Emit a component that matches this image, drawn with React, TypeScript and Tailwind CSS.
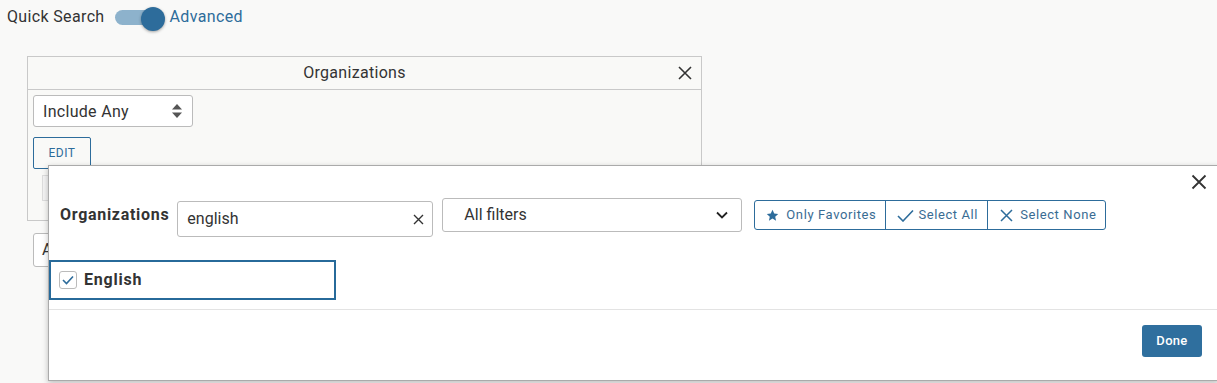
import React from "react";

const font = { fontFamily: "Roboto, 'Liberation Sans', sans-serif" };

export default function App() {
  return (
    <div className="relative w-[1217px] h-[383px] overflow-hidden bg-[#f9f9f8] text-[#333]" style={font}>
      {/* Top toggle row */}
      <div className="flex items-center h-[34px] pl-[7px] tracking-[0.35px]">
        <span className="text-[16px] text-[#333]">Quick Search</span>
        <div className="relative ml-[10px] w-[52px] h-[24px] flex items-center">
          <div className="w-[46px] h-[15px] rounded-full bg-[#8db2cc]" />
          <div className="absolute left-[26px] top-[2px] w-[24px] h-[24px] rounded-full bg-[#2d6c9b] shadow-[0_1px_3px_rgba(0,0,0,0.35)]" />
        </div>
        <span className="ml-[3px] text-[16px] text-[#2d6c9b]">Advanced</span>
      </div>

      {/* Background panel */}
      <div className="ml-[27px] mt-[22px] w-[675px] h-[165px] border border-[#c9c9c9] bg-[#f9f9f7]">
        <div className="relative h-[33px] border-b border-[#c9c9c9] flex items-center justify-center pr-[20px]">
          <span className="text-[16px] tracking-[0.3px] text-[#333]">Organizations</span>
          <svg className="absolute right-[9px] top-[9px]" width="14" height="14" viewBox="0 0 14 14">
            <path d="M1 1L13 13M13 1L1 13" stroke="#333" strokeWidth="1.6" />
          </svg>
        </div>
        <div className="pl-[5px] pt-[5px]">
          <div className="w-[160px] h-[32px] border border-[#bbb] rounded-[3px] bg-white flex items-center justify-between px-[9px]">
            <span className="text-[16px] tracking-[0.3px] text-[#333] mt-[1px]">Include Any</span>
            <svg width="12" height="18" viewBox="0 0 12 18">
              <path d="M6 2L11 7.5H1Z" fill="#555" />
              <path d="M6 16L11 10.5H1Z" fill="#555" />
            </svg>
          </div>
          <div className="mt-[10px] w-[58px] h-[32px] border border-[#2d6c9b] rounded-[2px] flex items-center justify-center">
            <span className="text-[12px] text-[#2d6c9b] tracking-[0.5px]">EDIT</span>
          </div>
          <div className="mt-[6px] ml-[9px] w-[20px] h-[26px] border border-[#ddd] bg-[#f4f4f4]" />
        </div>
      </div>
      <div className="ml-[33px] mt-[12px] w-[60px] h-[34px] border border-[#bbb] rounded-[3px] bg-white flex items-center pl-[8px]">
        <span className="text-[16px] text-[#333]">A</span>
      </div>

      {/* Modal */}
      <div className="absolute left-[48px] top-[165px] right-[-2px] h-[216px] bg-white border border-[#aaa] shadow-[0_2px_6px_rgba(0,0,0,0.25)] flex flex-col">
        <svg className="absolute right-[11px] top-[8px]" width="16" height="16" viewBox="0 0 16 16">
          <path d="M1.5 1.5L14.5 14.5M14.5 1.5L1.5 14.5" stroke="#333" strokeWidth="1.8" />
        </svg>
        <div className="flex items-start mt-[32px] pl-[11px] h-[38px]">
          <span className="mt-[7px] text-[16px] leading-[20px] font-bold tracking-[0.7px] text-[#333]">Organizations</span>
          <div className="ml-[8px] w-[256px] h-[36px] mt-[3px] border border-[#bbb] rounded-[3px] flex items-center justify-between pl-[9px] pr-[8px]">
            <span className="text-[16px] text-[#333]">english</span>
            <svg width="11" height="11" viewBox="0 0 11 11">
              <path d="M1 1L10 10M10 1L1 10" stroke="#333" strokeWidth="1.4" />
            </svg>
          </div>
          <div className="ml-[9px] w-[300px] h-[34px] border border-[#bbb] rounded-[3px] flex items-center justify-between pl-[21px] pr-[13px]">
            <span className="text-[16px] text-[#333]">All filters</span>
            <svg width="12" height="8" viewBox="0 0 12 8">
              <path d="M1 1.5L6 6.5L11 1.5" stroke="#222" strokeWidth="1.8" fill="none" />
            </svg>
          </div>
          <div className="ml-[12px] mt-[2px] h-[30px] flex border border-[#2d6c9b] rounded-[3px] text-[13px] text-[#3a6c93] tracking-[0.6px]">
            <div className="flex items-center pl-[11px] pr-[9px] border-r border-[#2d6c9b]">
              <svg width="13" height="13" viewBox="0 0 24 24" className="mr-[7px]">
                <path d="M12 1.5l3.2 6.9 7.3.8-5.5 5 1.6 7.3L12 17.7 5.4 21.5 7 14.2 1.5 9.2l7.3-.8z" fill="#2d6c9b" />
              </svg>
              <span>Only Favorites</span>
            </div>
            <div className="flex items-center pl-[11px] pr-[9px] border-r border-[#2d6c9b]">
              <svg width="17" height="13" viewBox="0 0 17 13" className="mr-[4px]">
                <path d="M1 7L6 12L16 1.5" stroke="#2d6c9b" strokeWidth="1.6" fill="none" />
              </svg>
              <span>Select All</span>
            </div>
            <div className="flex items-center pl-[12px] pr-[9px]">
              <svg width="13" height="13" viewBox="0 0 13 13" className="mr-[7px]">
                <path d="M1 1L12 12M12 1L1 12" stroke="#2d6c9b" strokeWidth="1.5" />
              </svg>
              <span>Select None</span>
            </div>
          </div>
        </div>
        <div className="mt-[24px] w-[287px] h-[40px] border-2 border-[#276a9a] flex items-center pl-[8px]">
          <div className="w-[18px] h-[18px] border border-[#bbb] rounded-[3px] flex items-center justify-center">
            <svg width="12" height="10" viewBox="0 0 12 10">
              <path d="M1 5L4.5 8.5L11 1.5" stroke="#2d6c9b" strokeWidth="1.6" fill="none" />
            </svg>
          </div>
          <span className="ml-[7px] text-[16px] font-bold tracking-[0.8px] text-[#333]">English</span>
        </div>
        <div className="mt-[9px] border-t border-[#e3e3e3]" />
        <div className="flex justify-end pr-[16px] pt-[15px]">
          <div className="w-[60px] h-[32px] rounded-[3px] bg-[#2f6f9e] flex items-center justify-center">
            <span className="text-[13px] font-medium tracking-[0.3px] text-white">Done</span>
          </div>
        </div>
      </div>
    </div>
  );
}
